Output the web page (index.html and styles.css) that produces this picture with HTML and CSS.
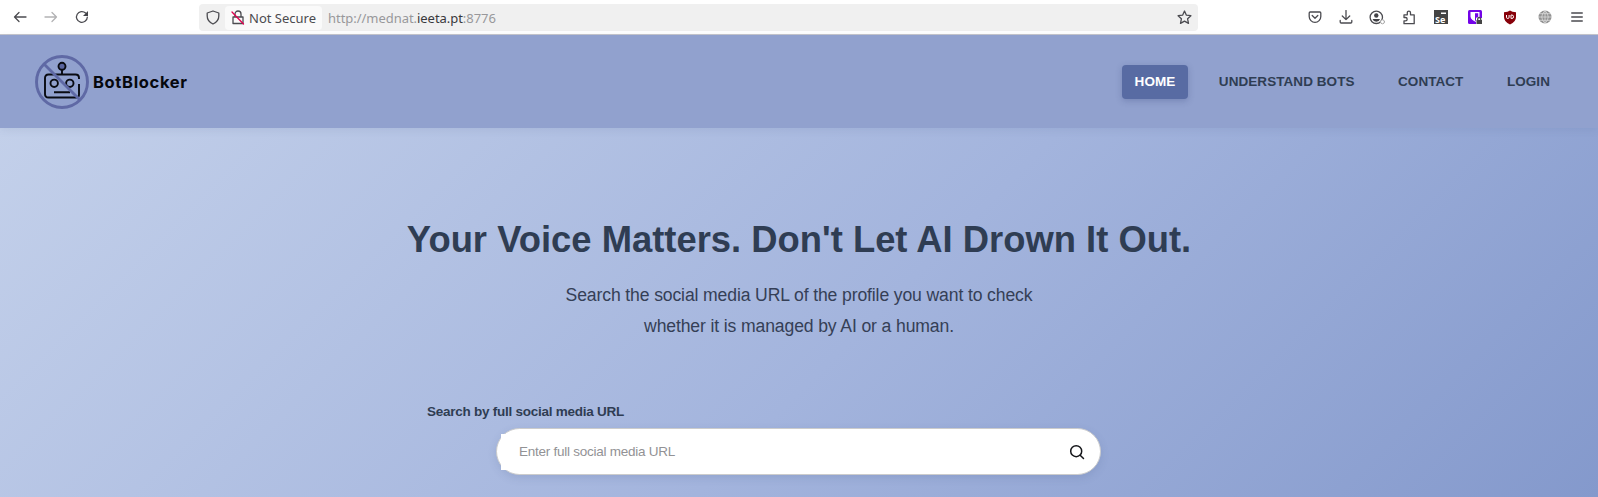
FILE: index.html
```html
<!DOCTYPE html>
<html lang="en">
<head>
<meta charset="utf-8">
<title>BotBlocker</title>
<link rel="stylesheet" href="styles.css">
</head>
<body>
<div class="toolbar">
  <div class="history">
    <svg width="14" height="14" viewBox="0 0 14 14" class="ico"><path d="M13 7H1.500M6 2.500 1.500 7 6 11.500"/></svg>
    <svg width="14" height="14" viewBox="0 0 14 14" class="ico faded"><path d="M1 7h11.500M8 2.500 12.500 7 8 11.500"/></svg>
    <svg width="14" height="14" viewBox="0 0 14 14" class="ico"><path d="M12.300 7.200A5.400 5.400 0 1 1 10.600 3"/><path class="solid" d="M13 1v5H8z"/></svg>
  </div>
  <div class="address">
    <svg width="14" height="15" viewBox="0 0 14 15" class="ico shield"><path d="M7 1 12.800 3v3c0 3.500-2 6.300-5.800 8C3.200 12.300 1.200 9.500 1.200 6V3z"/></svg>
    <div class="security">
      <svg width="14" height="15" viewBox="0 0 14 15" class="ico"><path d="M2 7h10v6.500H2zM4 7V4a3 3 0 0 1 6 0v3"/><path class="slash" d="M1 2l11.500 12"/></svg>
      <span>Not Secure</span>
    </div>
    <div class="url">http://mednat.<b>ieeta.pt</b>:8776</div>
    <svg width="15" height="15" viewBox="0 0 15 15" class="ico star"><path d="M7.500 1l1.900 4.200 4.500.5-3.300 3.100.9 4.600-4-2.300-4 2.300.9-4.600L1.100 5.700l4.500-.5z"/></svg>
  </div>
  <div class="extensions">
    <svg width="14" height="14" viewBox="0 0 14 14" class="ico"><path d="M2.200 2h9.600q1 0 1 1v3.500a5.800 5.800 0 0 1-11.600 0V3q0-1 1-1zM4.200 5.500 7 8.200l2.800-2.700"/></svg>
    <svg width="14" height="14" viewBox="0 0 14 14" class="ico"><path d="M7 .5v9M3.300 6 7 9.600 10.700 6M1.200 10.500V12q0 1 1 1h9.600q1 0 1-1v-1.500"/></svg>
    <svg width="17" height="15" viewBox="0 0 17 15" class="ico"><circle cx="7.300" cy="7.300" r="6.200"/><circle class="solid" cx="7.300" cy="5.500" r="2.200"/><path class="solid" d="M3.500 9h7.600q-1 2.800-3.800 2.800T3.500 9z"/><circle class="dot" cx="13.500" cy="11.800" r="2"/></svg>
    <svg width="14" height="15" viewBox="0 0 14 15" class="ico"><path d="M2 13.700V10.800h1.500a1.600 1.600 0 0 0 0-3.300H2V4.800h3.300V2.700a1.600 1.600 0 0 1 3.200 0v2.100h3.700v8.900z"/></svg>
    <svg width="14" height="14" viewBox="0 0 14 14"><path fill="#444" d="M0 0h14v14H0z"/><path fill="#fff" d="M7 2.500h5v1.500H7z"/><text class="se" x="1" y="12.500">Se</text></svg>
    <svg width="15" height="15" viewBox="0 0 15 15"><rect width="14" height="14" rx="1.500" fill="#7303e8"/><path fill="#fff" d="M2.500 2h9v6H8.500v4.200C5 10.800 2.500 8.800 2.500 6.500z"/><path fill="#7303e8" d="M7 3.300h3.200v4H8.500v3L7 11z"/><path fill="#fff" d="M8 8h7v7H8z"/><path fill="#444" d="M8.500 10h5.500v4H8.500z"/><path d="M9.700 10V9a1.500 1.500 0 0 1 3 0v1" class="ico"/></svg>
    <svg width="14" height="15" viewBox="0 0 14 15"><path fill="#870009" d="M7 .5Q9 2.200 13 2.300V7q0 5-6 7.500Q1 12 1 7V2.300Q5 2.200 7 .5z"/><path d="M3.500 5v2.200q0 1.300 1.300 1.300T6.100 7.200V5M8 5v3.500h.8a1.700 1.700 0 0 0 0-3.500z" fill="none" stroke="#fff"/></svg>
    <svg width="14" height="14" viewBox="0 0 14 14"><circle cx="7" cy="7" r="6.500" fill="#929292"/><path d="M0 7h14M7 0v14M1.500 3.700h11M1.500 10.300h11M7 .5Q.5 7 7 13.500M7 .5q6.500 6.500 0 13" fill="none" stroke="#e4e4e4" stroke-width=".7"/></svg>
    <svg width="12" height="12" viewBox="0 0 12 12" class="ico"><path d="M.7 2h10.600M.7 6h10.600M.7 10h10.600"/></svg>
  </div>
</div>
<header class="header">
  <div class="brand">
    <svg width="54" height="54" viewBox="0 0 54 54" fill="none">
      <g stroke="#090b12" stroke-width="1.900">
        <circle cx="27" cy="11.300" r="3.500" fill="#59649d"/>
        <path d="M27 15v4M44 24v-1q0-3.500-3.500-3.500h-27Q10 19.500 10 23v16q0 3.500 3.500 3.500h27.800q2.700 0 2.700-2.700V29M19 37.300h16"/>
        <circle cx="19.200" cy="28.300" r="3.700"/><circle cx="34.800" cy="28.300" r="3.700"/>
      </g>
      <g stroke="#5f69a5" stroke-width="2.900"><circle cx="27" cy="27" r="25.500"/><path d="M9 9l36 36"/></g>
    </svg>
    <span class="brand-name">BotBlocker</span>
  </div>
  <nav class="nav">
    <a class="nav-link active">HOME</a>
    <a class="nav-link">UNDERSTAND BOTS</a>
    <a class="nav-link">CONTACT</a>
    <a class="nav-link">LOGIN</a>
  </nav>
</header>
<main class="hero">
  <h1 class="title">Your Voice Matters. Don't Let AI Drown It Out.</h1>
  <p class="subtitle">Search the social media URL of the profile you want to check<br>whether it is managed by AI or a human.</p>
  <form class="search">
    <label class="label" for="url">Search by full social media URL</label>
    <div class="search-box">
      <input class="input" id="url" type="text" placeholder="Enter full social media URL">
      <svg width="16" height="16" viewBox="0 0 16 16" class="magnifier"><circle cx="7.200" cy="7.200" r="5.500"/><path d="M11.200 11.200l3.300 3.300"/></svg>
    </div>
  </form>
</main>
</body>
</html>
```
FILE: styles.css
```css
* { box-sizing: border-box; }
body {
  margin: 0;
  height: 497px;
  overflow: hidden;
  display: flex;
  flex-direction: column;
  font-family: "Liberation Sans", Arial, sans-serif;
  color: #2f3d53;
}
svg { display: block; flex: none; }
.toolbar {
  flex: none;
  height: 35px;
  display: flex;
  align-items: center;
  background: #fff;
  border-bottom: 1px solid #c6c6cc;
}
.ico { fill: none; stroke: #4b4b50; stroke-width: 1.300; stroke-linejoin: round; stroke-linecap: round; }
.faded { stroke: #b2b2b4; }
.ico .solid { fill: #424247; stroke: none; }
.ico .slash { stroke: #e2004f; }
.ico .dot { fill: #fff; stroke: #aaa; stroke-width: 1; }
.se { font: bold 9px "Noto Sans", sans-serif; fill: #fff; }
.history { width: 198px; padding-left: 13px; display: flex; gap: 17px; }
.address {
  width: 999px;
  height: 27px;
  margin: 1px 0 0 1px;
  border-radius: 4px;
  background: #f0f0f0;
  display: flex;
  align-items: center;
  font: 13px "Noto Sans", sans-serif;
}
.shield { margin-left: 7px; }
.security {
  width: 97px;
  height: 24px;
  margin-left: 5px;
  padding-left: 6px;
  display: flex;
  align-items: center;
  gap: 4px;
  border-radius: 4px;
  background: #fafafa;
  color: #4b4b4f;
  white-space: nowrap;
}
.url { margin-left: 6px; color: #98989b; letter-spacing: -.04px; }
.url b { font-weight: 400; color: #38383c; }
.star { margin-left: auto; margin-right: 6px; }
.extensions {
  flex: 1;
  padding-right: 4px;
  display: grid;
  grid-template-columns: 31px 31px 33px 29px 36px 32px 38px 31px 34px;
  justify-content: end;
  align-items: center;
  justify-items: center;
}
.header {
  position: relative;
  flex: none;
  height: 93px;
  padding: 0 35px;
  display: flex;
  align-items: center;
  justify-content: space-between;
  background: #91a1ce;
  box-shadow: 0 2px 8px rgba(60, 80, 130, .1);
}
.brand { display: flex; align-items: center; gap: 4px; }
.brand-name { font: 700 16.500px Inter, sans-serif; letter-spacing: .65px; color: #06080d; }
.nav { display: flex; gap: 17.500px; }
.nav-link {
  height: 34px;
  padding: 0 13px;
  line-height: 34px;
  border-radius: 4px;
  font-size: 13.500px;
  letter-spacing: .06px;
  font-weight: 700;
}
.nav-link.active { background: #586ba3; color: #fff; box-shadow: 0 2px 6px rgba(40, 55, 110, .25); }
.hero {
  flex: 1;
  padding-top: 89px;
  display: flex;
  flex-direction: column;
  align-items: center;
  background: linear-gradient(135deg, #c3d0ea 0%, #a3b4dd 54%, #8499cc 100%);
}
.title { margin: 0; font-size: 36.400px; line-height: 46px; white-space: nowrap; }
.subtitle { margin: 17px 0 0; font-size: 17.600px; letter-spacing: -.13px; line-height: 31px; text-align: center; color: #353f56; }
.search { width: 744px; margin: 62px 0 0; }
.label { display: block; font-size: 13.500px; letter-spacing: -.25px; font-weight: 700; line-height: 16px; }
.search-box {
  width: 605px;
  height: 47px;
  margin: 8px 0 0 69px;
  padding: 0 15px 0 4px;
  display: flex;
  align-items: center;
  justify-content: space-between;
  border: 1px solid #ccc;
  border-radius: 24px;
  background: #fff;
  box-shadow: 0 3px 9px rgba(60, 80, 130, .15);
}
.input { width: 540px; height: 36px; padding: 0 0 0 18px; border: 0; background: #fff; font: 13.500px "Liberation Sans", Arial, sans-serif; letter-spacing: -.25px; }
.input::placeholder { color: #929295; }
.magnifier { fill: none; stroke: #15161a; stroke-width: 1.500; stroke-linecap: round; }
```
